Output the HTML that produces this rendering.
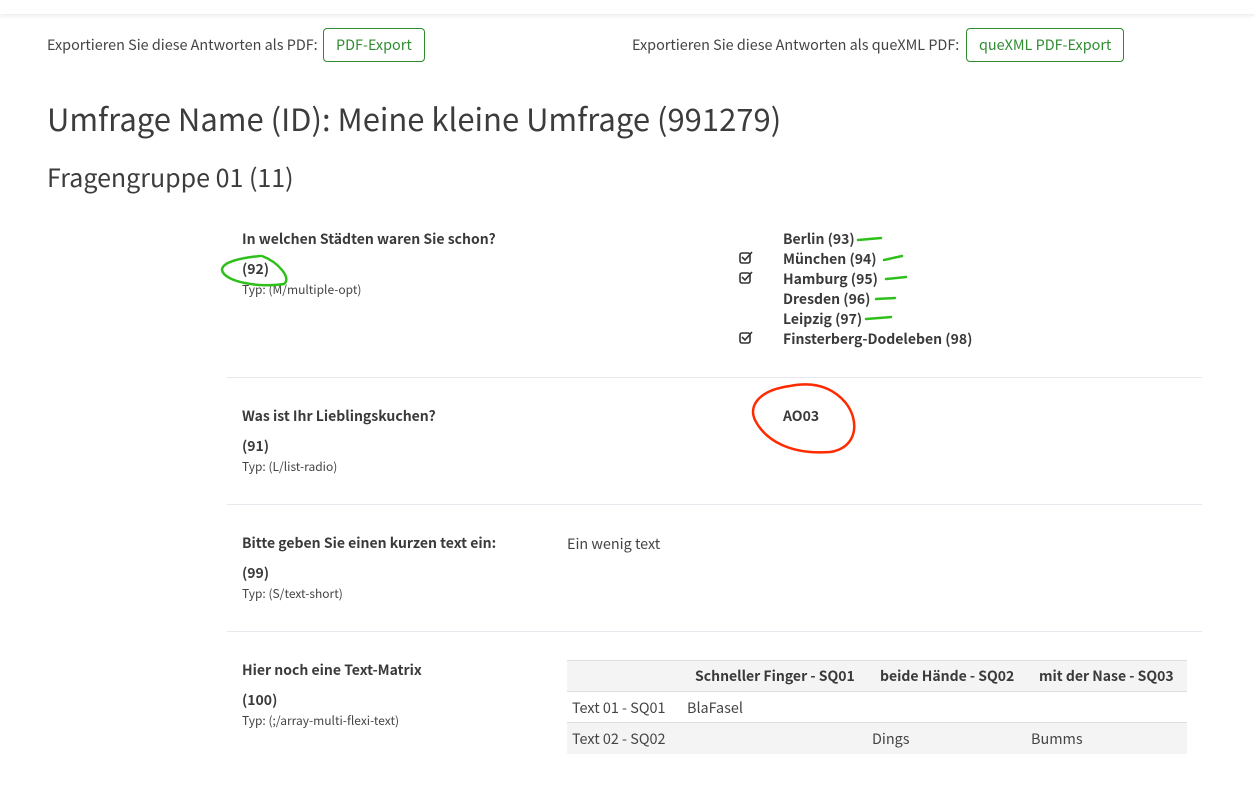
<!DOCTYPE html>
<html><head><meta charset="utf-8"><style>
*{margin:0;padding:0;box-sizing:border-box}
body{width:1255px;height:798px;background:#fff;font-family:"Noto Sans CJK SC","DejaVu Sans",sans-serif;color:#333;position:relative;overflow:hidden}
.a{position:absolute;white-space:nowrap}
.top{position:absolute;left:0;top:0;width:1255px;height:14px;background:#fff;box-shadow:0 2px 4px rgba(0,0,0,.08)}
.btn{position:absolute;border:1px solid #2e8b2e;border-radius:4px;color:#328c32;font-size:14.4px;height:34px;line-height:32px;padding:0 12px}
.t14{font-size:14.4px;color:#444}
.b{font-weight:bold;font-size:14px;color:#3a3a3a}
.s{font-size:12px;color:#444}
.hr{position:absolute;left:227px;width:975px;height:1px;background:#e8e8ee}
table{position:absolute;left:567px;top:660px;width:620px;border-collapse:collapse;font-size:14.4px;color:#444;table-layout:fixed}
td,th{height:31px;padding:0 5px;text-align:left;border-top:1px solid #ddd}
th{font-weight:bold;color:#3a3a3a;background:#f4f4f4;font-size:14px;padding-left:13px}
tr.g td{background:#f4f4f4}
</style></head><body>
<div class="top"></div>
<div class="a t14" style="left:47px;top:34px">Exportieren Sie diese Antworten als PDF:</div>
<div class="btn" style="left:323px;top:28px">PDF-Export</div>
<div class="a t14" style="left:632px;top:34px">Exportieren Sie diese Antworten als queXML PDF:</div>
<div class="btn" style="left:966px;top:28px">queXML PDF-Export</div>
<div class="a" style="left:47px;top:95px;font-size:31px;color:#3c3c3c">Umfrage Name (ID): Meine kleine Umfrage (991279)</div>
<div class="a" style="left:47px;top:159px;font-size:25px;color:#3c3c3c">Fragengruppe 01 (11)</div>

<div class="a b" style="left:242px;top:229px">In welchen Städten waren Sie schon?</div>
<div class="a b" style="left:242px;top:259px">(92)</div>
<div class="a s" style="left:242px;top:281px">Typ: (M/multiple-opt)</div>
<div class="a b" style="left:783px;top:229px;line-height:20px">Berlin (93)<br>München (94)<br>Hamburg (95)<br>Dresden (96)<br>Leipzig (97)<br>Finsterberg-Dodeleben (98)</div>
<svg class="a" style="left:0;top:0" width="1255" height="798">
<g stroke="#333" stroke-width="1.6" fill="none">
<g id="cb"><rect x="740" y="253" width="10" height="10" rx="2"/><path d="M742 257 L745 260 L752 252"/></g>
<use href="#cb" y="20"/><use href="#cb" y="80"/>
</g>
<g stroke="#2fbf1a" stroke-width="2.5" fill="none" stroke-linecap="round">
<path d="M858 240 L881 238"/><path d="M884 260 L902 256"/><path d="M886 279 L906 277"/><path d="M876 299 L895 298"/><path d="M866 319 L891 317"/>
<path d="M260 256 C240 258 222 262 222 270 C224 282 260 288 284 284 C292 278 278 262 262 256"/>
</g>
<path d="M790 386 C760 390 748 405 755 420 C765 440 790 455 830 452 C858 448 860 420 845 402 C830 385 810 382 790 386Z" stroke="#ff2a00" stroke-width="2.5" fill="none"/>
</svg>
<div class="hr" style="top:377px"></div>

<div class="a b" style="left:242px;top:406px">Was ist Ihr Lieblingskuchen?</div>
<div class="a b" style="left:242px;top:436px">(91)</div>
<div class="a s" style="left:242px;top:458px">Typ: (L/list-radio)</div>
<div class="a b" style="left:783px;top:406px">AO03</div>
<div class="hr" style="top:504px"></div>

<div class="a b" style="left:242px;top:533px">Bitte geben Sie einen kurzen text ein:</div>
<div class="a b" style="left:242px;top:563px">(99)</div>
<div class="a s" style="left:242px;top:585px">Typ: (S/text-short)</div>
<div class="a t14" style="left:567px;top:533px">Ein wenig text</div>
<div class="hr" style="top:631px"></div>

<div class="a b" style="left:242px;top:660px">Hier noch eine Text-Matrix</div>
<div class="a b" style="left:242px;top:690px">(100)</div>
<div class="a s" style="left:242px;top:712px">Typ: (;/array-multi-flexi-text)</div>
<table>
<colgroup><col style="width:115px"><col style="width:185px"><col style="width:159px"><col></colgroup>
<tr><th></th><th>Schneller Finger - SQ01</th><th>beide Hände - SQ02</th><th>mit der Nase - SQ03</th></tr>
<tr><td>Text 01 - SQ01</td><td>BlaFasel</td><td></td><td></td></tr>
<tr class="g"><td>Text 02 - SQ02</td><td></td><td>Dings</td><td>Bumms</td></tr>
</table>
</body></html>
